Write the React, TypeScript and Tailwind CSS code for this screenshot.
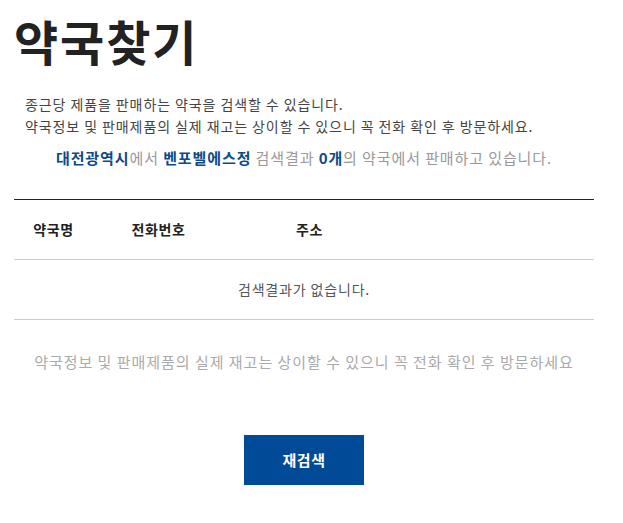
export default function App() {
  return (
    <div className="w-[623px] min-h-[523px] bg-white font-['Noto_Sans_CJK_KR','Noto_Sans',sans-serif]">
      <div className="ml-[14px] w-[580px]">
        <h1 className="pt-[10px] text-[48px] leading-[60px] font-bold tracking-[0.04em] text-[#222]">약국찾기</h1>

        <div className="mt-[23px] pl-[11px] text-[14px] leading-[22px] tracking-[0.065em] text-[#444]">
          <p>종근당 제품을 판매하는 약국을 검색할 수 있습니다.</p>
          <p>약국정보 및 판매제품의 실제 재고는 상이할 수 있으니 꼭 전화 확인 후 방문하세요.</p>
        </div>

        <p className="mt-[10px] text-center text-[15px] leading-[22px] tracking-[0.06em] text-[#999]">
          <strong className="font-bold text-[#0b4a8c]">대전광역시</strong>에서{' '}
          <strong className="font-bold text-[#0b4a8c]">벤포벨에스정</strong> 검색결과{' '}
          <strong className="font-bold text-[#0b4a8c]">0개</strong>의 약국에서 판매하고 있습니다.
        </p>

        <div className="mt-[30px] border-t border-[#222]">
          <div className="grid h-[60px] grid-cols-[79px_131px_171px_1fr] items-center border-b border-[#ccc] text-center text-[14px] font-bold tracking-[0.04em] text-[#222]">
            <span>약국명</span>
            <span>전화번호</span>
            <span>주소</span>
            <span />
          </div>
          <div className="flex h-[60px] items-center justify-center border-b border-[#ccc] text-[14px] tracking-[0.06em] text-[#555]">
            검색결과가 없습니다.
          </div>
        </div>

        <p className="mt-[31px] text-center text-[15px] leading-[22px] tracking-[0.065em] text-[#aaa]">
          약국정보 및 판매제품의 실제 재고는 상이할 수 있으니 꼭 전화 확인 후 방문하세요
        </p>

        <div className="mt-[62px] flex justify-center">
          <button className="h-[50px] w-[120px] bg-[#004a97] text-[15px] font-bold tracking-[0.04em] text-white">재검색</button>
        </div>
      </div>
    </div>
  );
}
